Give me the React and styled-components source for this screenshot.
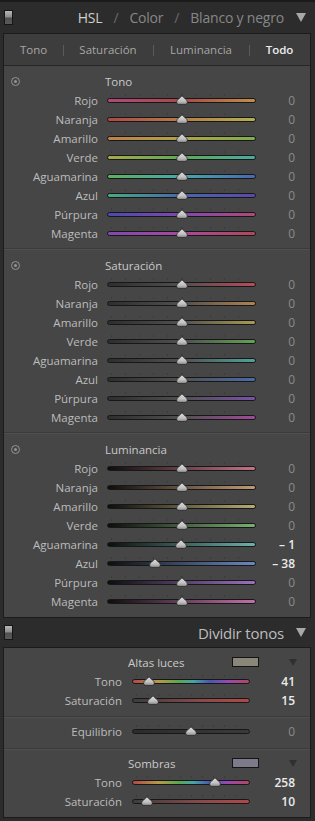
import React from 'react';
import styled, { createGlobalStyle } from 'styled-components';

const GlobalStyle = createGlobalStyle`
    html, body {
        margin: 0;
        padding: 0;
        background: #2c2c2c;
    }
    body {
        font-family: "Open Sans", "Noto Sans", sans-serif;
        width: 315px;
        height: 821px;
        overflow: hidden;
    }
`;

const Page = styled.div`
    width: 315px;
    height: 821px;
    background: #2c2c2c;
    border-top: 2px solid #1b1b1b;
    box-sizing: border-box;
`;

const ModuleHeader = styled.div`
    height: ${p => p.$height}px;
    display: flex;
    align-items: center;
    padding: 0 9px 0 4px;
`;

const Toggle = styled.div`
    width: 9px;
    height: 15px;
    box-sizing: border-box;
    border: 1px solid #161616;
    background: linear-gradient(to bottom, #b8b8b8 0%, #8a8a8a 48%, #4e4e4e 52%, #5a5a5a 100%);
`;

const Titles = styled.div`
    margin-left: auto;
    display: flex;
    align-items: center;
    font-size: ${p => p.$size}px;
    letter-spacing: -0.2px;
`;

const Title = styled.span`
    color: ${p => (p.$active ? '#cfcfcf' : '#878787')};
`;

const PanelTitle = styled.span`
    color: #bdbdbd;
`;

const Slash = styled.span`
    color: #6a6a6a;
    margin: 0 11px;
`;

const Arrow = styled.svg`
    margin-left: 12px;
    display: block;
`;

const Panel = styled.div`
    margin-left: 3px;
    width: 308px;
    box-sizing: border-box;
    border: 1px solid #1b1b1b;
    background: #464646;
`;

const TabBar = styled.div`
    height: 31px;
    display: grid;
    grid-template-columns: 59px 90px 96px 1fr;
    align-items: center;
    background: #3d3d3d;
    border-bottom: 1px solid #262626;
`;

const Tab = styled.div`
    position: relative;
    text-align: center;
    font-size: 11.5px;
    color: ${p => (p.$active ? '#ececec' : '#a6a6a6')};
    font-weight: ${p => (p.$active ? 600 : 400)};

    &::before {
        content: '';
        display: ${p => (p.$first ? 'none' : 'block')};
        position: absolute;
        left: 0;
        top: 3px;
        height: 11px;
        width: 1px;
        background: #5a5a5a;
    }
`;

const Section = styled.div`
    padding: ${p => (p.$first ? 5 : 6)}px 0 5px;
    border-top: ${p => (p.$first ? 'none' : '1px solid #3a3a3a')};
    box-shadow: ${p => (p.$first ? 'none' : 'inset 0 1px 0 #505050')};

    &:last-child {
        padding-bottom: 6px;
    }
`;

const HeadingRow = styled.div`
    height: 20px;
    display: grid;
    grid-template-columns: 94px 149px 1fr;
    column-gap: 9px;
    align-items: center;
`;

const ResetIcon = styled.div`
    margin-left: 7px;
    width: 9px;
    height: 9px;
    box-sizing: border-box;
    border: 1px solid #939393;
    border-radius: 50%;
    display: flex;
    align-items: center;
    justify-content: center;

    &::after {
        content: '';
        width: 3px;
        height: 3px;
        border-radius: 50%;
        background: #939393;
    }
`;

const Heading = styled.div`
    font-size: 11.5px;
    color: #c9c9c9;
    margin-left: -2px;
    white-space: nowrap;
`;

const Row = styled.div`
    height: 19px;
    display: grid;
    grid-template-columns: ${p => p.$cols};
    column-gap: ${p => p.$gap}px;
    align-items: center;
    padding-right: 15px;
`;

const Label = styled.div`
    text-align: right;
    font-size: 11.5px;
    color: #bcbcbc;
    white-space: nowrap;
`;

const Value = styled.div`
    text-align: right;
    font-size: 12px;
    color: ${p => (p.$active ? '#ebebeb' : '#8a8a8a')};
    font-weight: ${p => (p.$active ? 600 : 400)};
    white-space: pre;
`;

const SliderCell = styled.div`
    position: relative;
    height: 19px;
    display: flex;
    align-items: center;

    &::before {
        content: '';
        position: absolute;
        left: 4px;
        right: 4px;
        top: 3px;
        height: 2px;
        background: repeating-linear-gradient(to right, #3b3b3b 0 1px, transparent 1px ${p => p.$tick}px);
    }
`;

const Track = styled.div`
    width: 100%;
    height: 5px;
    box-sizing: border-box;
    border: 1px solid #171717;
    border-radius: 3px;
    background: ${p => p.$bg};
`;

const Thumb = styled.svg`
    position: absolute;
    top: 4px;
    display: block;
`;

const SplitGroup = styled.div`
    padding: ${p => p.$top}px 0 ${p => p.$bottom}px;
    border-top: ${p => (p.$first ? 'none' : '1px solid #3a3a3a')};
    box-shadow: ${p => (p.$first ? 'none' : 'inset 0 1px 0 #505050')};
`;

const SplitHeading = styled.div`
    height: 20px;
    display: grid;
    grid-template-columns: 126px 102px 27px 1fr;
    align-items: center;
    padding-right: 13px;
`;

const Swatch = styled.div`
    height: 10px;
    box-sizing: border-box;
    border: 1px solid #141414;
    background: ${p => p.$color};
`;

const SmallArrow = styled.svg`
    justify-self: end;
    display: block;
`;

const Slider = ({ width, bg, t }) => {
    const pos = 4 + (width - 8) * t;
    return (
        <SliderCell $tick={(width - 8) / 10}>
            <Track $bg={bg} />
            <Thumb width="12" height="10" viewBox="0 0 12 10" style={{ left: pos - 6 }}>
                <defs>
                    <linearGradient id="tg" x1="0" y1="0" x2="0" y2="1">
                        <stop offset="0" stopColor="#dcdcdc" />
                        <stop offset="0.6" stopColor="#c2c2c2" />
                        <stop offset="1" stopColor="#8e8e8e" />
                    </linearGradient>
                </defs>
                <path d="M6 0.6 C6.8 2.4 11.4 4.6 11.4 7 C11.4 8.6 10.4 9.4 9 9.4 L3 9.4 C1.6 9.4 0.6 8.6 0.6 7 C0.6 4.6 5.2 2.4 6 0.6 Z" fill="url(#tg)" stroke="#262626" strokeWidth="0.8" />
            </Thumb>
        </SliderCell>
    );
};

const names = ['Rojo', 'Naranja', 'Amarillo', 'Verde', 'Aguamarina', 'Azul', 'Púrpura', 'Magenta'];

const hueStops = [
    ['#b0487c', '#ab4848', '#c28e4a'],
    ['#ae4848', '#b87c48', '#b2b24e'],
    ['#bf8048', '#b0a24a', '#7cb04c'],
    ['#a6aa4a', '#5eaa58', '#48aaa0'],
    ['#5eb060', '#48a8aa', '#4868b2'],
    ['#48aa84', '#4868aa', '#5a48aa'],
    ['#4a4ab2', '#8048b0', '#b0487a'],
    ['#8048b0', '#a8489e', '#b0485a'],
];

const satColors = ['#b84a5a', '#b08250', '#a89a52', '#62a252', '#52a29a', '#4a6aaa', '#7a52aa', '#a04a9a'];
const lumColors = ['#c27484', '#c09a74', '#b6ac72', '#78b070', '#6cb0aa', '#6a88c2', '#9a70c0', '#c070a8'];

const sections = [
    {
        title: 'Tono',
        rows: names.map((n, i) => ({ name: n, bg: `linear-gradient(to right, ${hueStops[i].join(', ')})`, value: 0 })),
    },
    {
        title: 'Saturación',
        rows: names.map((n, i) => ({ name: n, bg: `linear-gradient(to right, #2e2e2e, #505050 50%, ${satColors[i]})`, value: 0 })),
    },
    {
        title: 'Luminancia',
        rows: names.map((n, i) => ({
            name: n,
            bg: `linear-gradient(to right, #0e0e0e, ${lumColors[i]})`,
            value: n === 'Aguamarina' ? -1 : n === 'Azul' ? -38 : 0,
        })),
    },
];

const fmt = v => (v < 0 ? `– ${-v}` : `${v}`);

const spectrum = 'linear-gradient(to right, #b04848, #b49a48 22%, #58a850 40%, #48a4a8 52%, #4858b0 66%, #9848b0 82%, #b04860)';
const redSat = 'linear-gradient(to right, #3c3c3c, #8a4a4a 60%, #b04848)';

const split = [
    {
        title: 'Altas luces',
        color: '#8a877a',
        rows: [
            { name: 'Tono', bg: spectrum, value: 41, t: 41 / 360 },
            { name: 'Saturación', bg: redSat, value: 15, t: 0.15 },
        ],
    },
    {
        title: 'Sombras',
        color: '#7d7b8b',
        rows: [
            { name: 'Tono', bg: spectrum, value: 258, t: 258 / 360 },
            { name: 'Saturación', bg: redSat, value: 10, t: 0.1 },
        ],
    },
];

const DownArrow = ({ w, h, color, Comp }) => (
    <Comp width={w} height={h} viewBox={`0 0 ${w} ${h}`}>
        <polygon points={`0,0 ${w},0 ${w / 2},${h}`} fill={color} />
    </Comp>
);

const SplitRow = ({ row }) => (
    <Row $cols="118px 118px 1fr" $gap={10}>
        <Label>{row.name}</Label>
        <Slider width={118} bg={row.bg} t={row.t} />
        <Value $active={row.value !== 0}>{fmt(row.value)}</Value>
    </Row>
);

const SplitHead = ({ group }) => (
    <SplitHeading>
        <span />
        <Heading>{group.title}</Heading>
        <Swatch $color={group.color} />
        <DownArrow w={8} h={7} color="#303030" Comp={SmallArrow} />
    </SplitHeading>
);

export default function App() {
    return (
        <Page>
            <GlobalStyle />
            <ModuleHeader $height={31}>
                <Toggle />
                <Titles $size={14}>
                    <Title $active>HSL</Title>
                    <Slash>/</Slash>
                    <Title>Color</Title>
                    <Slash>/</Slash>
                    <Title>Blanco y negro</Title>
                </Titles>
                <DownArrow w={10} h={9} color="#a8a8a8" Comp={Arrow} />
            </ModuleHeader>
            <Panel>
                <TabBar>
                    <Tab $first>Tono</Tab>
                    <Tab>Saturación</Tab>
                    <Tab>Luminancia</Tab>
                    <Tab $active>Todo</Tab>
                </TabBar>
                {sections.map((s, si) => (
                    <Section key={s.title} $first={si === 0}>
                        <HeadingRow>
                            <ResetIcon />
                            <Heading>{s.title}</Heading>
                        </HeadingRow>
                        {s.rows.map(r => (
                            <Row key={r.name} $cols="94px 149px 1fr" $gap={9}>
                                <Label>{r.name}</Label>
                                <Slider width={149} bg={r.bg} t={(r.value + 100) / 200} />
                                <Value $active={r.value !== 0}>{fmt(r.value)}</Value>
                            </Row>
                        ))}
                    </Section>
                ))}
            </Panel>
            <ModuleHeader $height={29}>
                <Toggle />
                <Titles $size={15}>
                    <PanelTitle>Dividir tonos</PanelTitle>
                </Titles>
                <DownArrow w={10} h={9} color="#a8a8a8" Comp={Arrow} />
            </ModuleHeader>
            <Panel>
                <SplitGroup $first $top={4} $bottom={6}>
                    <SplitHead group={split[0]} />
                    {split[0].rows.map(r => <SplitRow key={r.name} row={r} />)}
                </SplitGroup>
                <SplitGroup $top={5} $bottom={7}>
                    <SplitRow row={{ name: 'Equilibrio', bg: 'linear-gradient(to right, #2c2c2c, #3a3a3a)', value: 0, t: 0.5 }} />
                </SplitGroup>
                <SplitGroup $top={4} $bottom={6}>
                    <SplitHead group={split[1]} />
                    {split[1].rows.map(r => <SplitRow key={r.name} row={r} />)}
                </SplitGroup>
            </Panel>
        </Page>
    );
}
